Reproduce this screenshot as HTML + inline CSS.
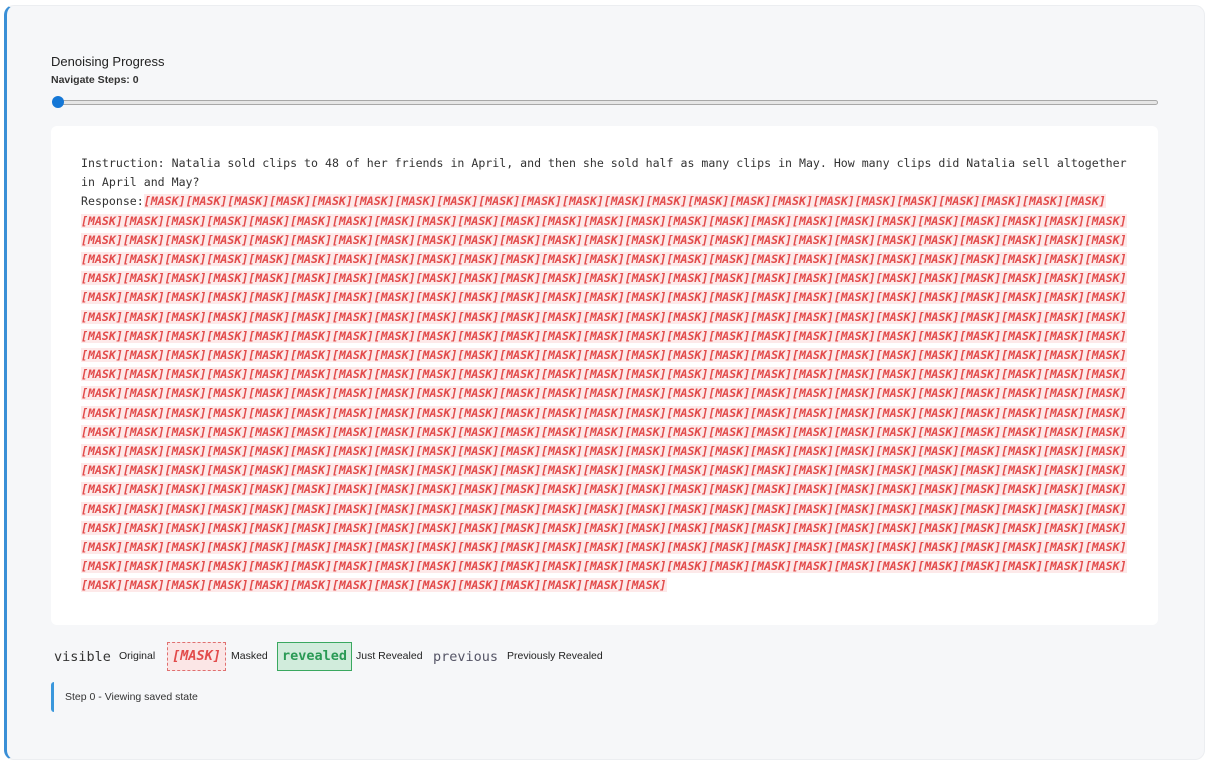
<!DOCTYPE html>
<html><head><meta charset="utf-8"><style>
html,body{margin:0;padding:0;background:#fff;width:1207px;height:763px;overflow:hidden;font-family:"Liberation Sans",sans-serif;}
.card{position:absolute;left:4px;top:5px;width:1197px;height:753px;background:#f6f7f9;border-left:3px solid #3a8fd6;border-radius:10px;border-top:1px solid #eceef1;border-right:1px solid #eceef1;border-bottom:1px solid #eceef1;}
.t1{position:absolute;left:44px;top:48px;font-size:13px;color:#222;}
.t2{position:absolute;left:44px;top:68px;font-size:10.5px;font-weight:bold;color:#333;}
.track{position:absolute;left:47px;top:94px;width:1102px;height:3px;background:#e6e6e6;border:1px solid #a8a8a8;border-radius:3px;}
.thumb{position:absolute;left:45px;top:90px;width:12px;height:12px;border-radius:50%;background:#1577d6;}
.box{position:absolute;left:44px;top:120px;width:1107px;height:499px;background:#fff;border-radius:6px;}
.txt{position:absolute;left:30px;top:28px;font-family:"DejaVu Sans Mono","Liberation Mono",monospace;font-size:11.58px;line-height:19.2px;color:#333;white-space:pre;}
.m{background:#fde9e9;color:#e24b4b;font-style:italic;font-weight:bold;}
.legend{position:absolute;left:47px;top:632px;height:30px;font-size:10.5px;color:#222;}
.legend span{position:absolute;white-space:nowrap;}
.mono{font-family:"DejaVu Sans Mono",monospace;font-size:13.5px;}
.step{position:absolute;left:44px;top:676px;width:200px;height:30px;border-left:3px solid #3a97dc;border-radius:3px;font-size:10.5px;color:#333;}
.step span{position:absolute;left:11px;top:9px;}
</style></head><body>
<div class="card">
<div class="t1">Denoising Progress</div>
<div class="t2">Navigate Steps: 0</div>
<div class="track"></div><div class="thumb"></div>
<div class="box"><div class="txt">Instruction: Natalia sold clips to 48 of her friends in April, and then she sold half as many clips in May. How many clips did Natalia sell altogether
in April and May?
Response:<span class="m">[MASK][MASK][MASK][MASK][MASK][MASK][MASK][MASK][MASK][MASK][MASK][MASK][MASK][MASK][MASK][MASK][MASK][MASK][MASK][MASK][MASK][MASK][MASK]</span>
<span class="m">[MASK][MASK][MASK][MASK][MASK][MASK][MASK][MASK][MASK][MASK][MASK][MASK][MASK][MASK][MASK][MASK][MASK][MASK][MASK][MASK][MASK][MASK][MASK][MASK][MASK]</span>
<span class="m">[MASK][MASK][MASK][MASK][MASK][MASK][MASK][MASK][MASK][MASK][MASK][MASK][MASK][MASK][MASK][MASK][MASK][MASK][MASK][MASK][MASK][MASK][MASK][MASK][MASK]</span>
<span class="m">[MASK][MASK][MASK][MASK][MASK][MASK][MASK][MASK][MASK][MASK][MASK][MASK][MASK][MASK][MASK][MASK][MASK][MASK][MASK][MASK][MASK][MASK][MASK][MASK][MASK]</span>
<span class="m">[MASK][MASK][MASK][MASK][MASK][MASK][MASK][MASK][MASK][MASK][MASK][MASK][MASK][MASK][MASK][MASK][MASK][MASK][MASK][MASK][MASK][MASK][MASK][MASK][MASK]</span>
<span class="m">[MASK][MASK][MASK][MASK][MASK][MASK][MASK][MASK][MASK][MASK][MASK][MASK][MASK][MASK][MASK][MASK][MASK][MASK][MASK][MASK][MASK][MASK][MASK][MASK][MASK]</span>
<span class="m">[MASK][MASK][MASK][MASK][MASK][MASK][MASK][MASK][MASK][MASK][MASK][MASK][MASK][MASK][MASK][MASK][MASK][MASK][MASK][MASK][MASK][MASK][MASK][MASK][MASK]</span>
<span class="m">[MASK][MASK][MASK][MASK][MASK][MASK][MASK][MASK][MASK][MASK][MASK][MASK][MASK][MASK][MASK][MASK][MASK][MASK][MASK][MASK][MASK][MASK][MASK][MASK][MASK]</span>
<span class="m">[MASK][MASK][MASK][MASK][MASK][MASK][MASK][MASK][MASK][MASK][MASK][MASK][MASK][MASK][MASK][MASK][MASK][MASK][MASK][MASK][MASK][MASK][MASK][MASK][MASK]</span>
<span class="m">[MASK][MASK][MASK][MASK][MASK][MASK][MASK][MASK][MASK][MASK][MASK][MASK][MASK][MASK][MASK][MASK][MASK][MASK][MASK][MASK][MASK][MASK][MASK][MASK][MASK]</span>
<span class="m">[MASK][MASK][MASK][MASK][MASK][MASK][MASK][MASK][MASK][MASK][MASK][MASK][MASK][MASK][MASK][MASK][MASK][MASK][MASK][MASK][MASK][MASK][MASK][MASK][MASK]</span>
<span class="m">[MASK][MASK][MASK][MASK][MASK][MASK][MASK][MASK][MASK][MASK][MASK][MASK][MASK][MASK][MASK][MASK][MASK][MASK][MASK][MASK][MASK][MASK][MASK][MASK][MASK]</span>
<span class="m">[MASK][MASK][MASK][MASK][MASK][MASK][MASK][MASK][MASK][MASK][MASK][MASK][MASK][MASK][MASK][MASK][MASK][MASK][MASK][MASK][MASK][MASK][MASK][MASK][MASK]</span>
<span class="m">[MASK][MASK][MASK][MASK][MASK][MASK][MASK][MASK][MASK][MASK][MASK][MASK][MASK][MASK][MASK][MASK][MASK][MASK][MASK][MASK][MASK][MASK][MASK][MASK][MASK]</span>
<span class="m">[MASK][MASK][MASK][MASK][MASK][MASK][MASK][MASK][MASK][MASK][MASK][MASK][MASK][MASK][MASK][MASK][MASK][MASK][MASK][MASK][MASK][MASK][MASK][MASK][MASK]</span>
<span class="m">[MASK][MASK][MASK][MASK][MASK][MASK][MASK][MASK][MASK][MASK][MASK][MASK][MASK][MASK][MASK][MASK][MASK][MASK][MASK][MASK][MASK][MASK][MASK][MASK][MASK]</span>
<span class="m">[MASK][MASK][MASK][MASK][MASK][MASK][MASK][MASK][MASK][MASK][MASK][MASK][MASK][MASK][MASK][MASK][MASK][MASK][MASK][MASK][MASK][MASK][MASK][MASK][MASK]</span>
<span class="m">[MASK][MASK][MASK][MASK][MASK][MASK][MASK][MASK][MASK][MASK][MASK][MASK][MASK][MASK][MASK][MASK][MASK][MASK][MASK][MASK][MASK][MASK][MASK][MASK][MASK]</span>
<span class="m">[MASK][MASK][MASK][MASK][MASK][MASK][MASK][MASK][MASK][MASK][MASK][MASK][MASK][MASK][MASK][MASK][MASK][MASK][MASK][MASK][MASK][MASK][MASK][MASK][MASK]</span>
<span class="m">[MASK][MASK][MASK][MASK][MASK][MASK][MASK][MASK][MASK][MASK][MASK][MASK][MASK][MASK][MASK][MASK][MASK][MASK][MASK][MASK][MASK][MASK][MASK][MASK][MASK]</span>
<span class="m">[MASK][MASK][MASK][MASK][MASK][MASK][MASK][MASK][MASK][MASK][MASK][MASK][MASK][MASK]</span></div></div>
<div class="legend">
<span class="mono" style="left:0;top:11px;color:#333;">visible</span>
<span style="left:65px;top:12px;">Original</span>
<span class="mono" style="left:113px;top:4px;width:57px;height:27px;border:1px dashed #e07070;background:#fbe6e6;color:#e24b4b;font-style:italic;font-weight:bold;text-align:center;line-height:27px;">[MASK]</span>
<span style="left:177px;top:12px;">Masked</span>
<span class="mono" style="left:223px;top:4px;width:73px;height:27px;border:1px solid #3aa860;background:#d1ecdc;color:#2a9a55;font-weight:bold;text-align:center;line-height:27px;">revealed</span>
<span style="left:302px;top:12px;">Just Revealed</span>
<span class="mono" style="left:379px;top:11px;color:#556;">previous</span>
<span style="left:453px;top:12px;">Previously Revealed</span>
</div>
<div class="step"><span>Step 0 - Viewing saved state</span></div>
</div>
</body></html>
